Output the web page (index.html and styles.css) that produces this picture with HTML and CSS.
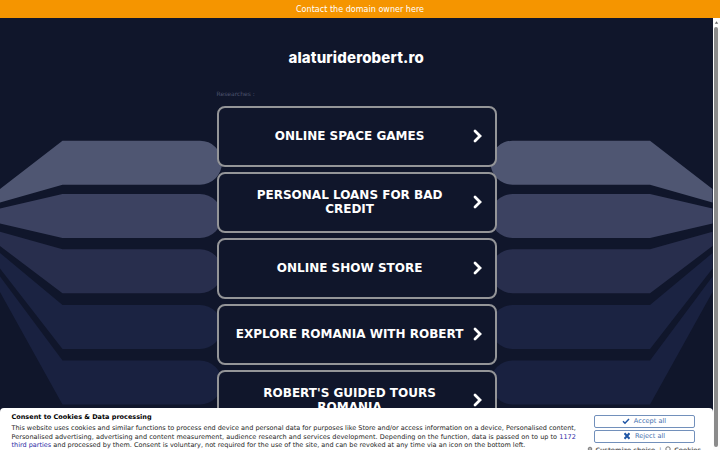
FILE: index.html
```
<!DOCTYPE html>
<html lang="en">
<head>
<meta charset="utf-8">
<title>alaturiderobert.ro</title>
<link rel="stylesheet" href="styles.css">
</head>
<body>
<a class="owner-bar">Contact the domain owner here</a>
<div class="viewport">
  <main class="page">
    <svg class="backdrop" viewBox="0 18 712.5 432" width="712.5" height="432" aria-hidden="true">
      <defs>
        <g id="bands">
          <path fill="#4f5672" d="M0 189L62.5 140.7H200a22 22 0 0 1 0 44H62.5L0 202.5z"/>
          <path fill="#3c4261" d="M0 208.5L62.5 194H200a22 22 0 0 1 0 44H62.5L0 223.5z"/>
          <path fill="#282e4d" d="M0 231.8L62.5 249.3H200a22 22 0 0 1 0 44H62.5L0 246z"/>
          <path fill="#1b2342" d="M0 253L62.5 305H200a22 22 0 0 1 0 44H62.5L0 268.5z"/>
          <path fill="#192140" d="M0 276.5L62.5 360.5H200a22 22 0 0 1 0 44H62.5L0 292z"/>
        </g>
      </defs>
      <use href="#bands"/>
      <use href="#bands" transform="translate(712.5 0) scale(-1 1)"/>
    </svg>
    <h1 class="domain">alaturiderobert.ro</h1>
    <section class="results">
      <p class="label">Researches :</p>
      <a class="result"><span class="name">Online Space Games</span><svg class="chevron" viewBox="0 0 10 14"><path d="M2 2l5 5-5 5"/></svg></a>
      <a class="result"><span class="name">Personal Loans For Bad Credit</span><svg class="chevron" viewBox="0 0 10 14"><path d="M2 2l5 5-5 5"/></svg></a>
      <a class="result"><span class="name">Online Show Store</span><svg class="chevron" viewBox="0 0 10 14"><path d="M2 2l5 5-5 5"/></svg></a>
      <a class="result"><span class="name">Explore Romania With Robert</span><svg class="chevron" viewBox="0 0 10 14"><path d="M2 2l5 5-5 5"/></svg></a>
      <a class="result"><span class="name">Robert's Guided Tours Romania</span><svg class="chevron" viewBox="0 0 10 14"><path d="M2 2l5 5-5 5"/></svg></a>
    </section>
  </main>
  <div class="scrollbar"><svg class="arrow" viewBox="0 0 6 9"><path d="M1 6L3 3l2 3z"/></svg><div class="thumb"></div></div>
</div>
<aside class="consent">
  <div class="copy">
    <h2>Consent to Cookies &amp; Data processing</h2>
    <p class="l1">This website uses cookies and similar functions to process end device and personal data for purposes like Store and/or access information on a device, Personalised content,</p>
    <p class="l2">Personalised advertising, advertising and content measurement, audience research and services development. Depending on the function, data is passed on to up to <a>1172</a></p>
    <p class="l3"><a>third parties</a> and processed by them. Consent is voluntary, not required for the use of the site, and can be revoked at any time via an icon on the bottom left.</p>
  </div>
  <div class="actions">
    <button><svg viewBox="0 0 8 8"><path d="M1 4.2l2 2L7 2"/></svg>Accept all</button>
    <button><svg class="cross" viewBox="0 0 8 8"><path d="M1.5 1.3l5 5.4M6.5 1.3l-5 5.4"/></svg>Reject all</button>
    <div class="links">
      <svg viewBox="0 0 6 6"><circle cx="3" cy="3" r="1.8"/><circle cx="3" cy="3" r=".5"/></svg><span>Customize choice</span><i>|</i>
      <svg viewBox="0 0 6 6"><circle cx="3" cy="3" r="2.2"/></svg><span>Cookies</span>
    </div>
  </div>
</aside>
</body>
</html>
```
FILE: styles.css
```
* { box-sizing: border-box; }
html, body { height: 100%; }
body { margin: 0; overflow: hidden; display: flex; flex-direction: column; background: #10162b; font-family: "DejaVu Sans", sans-serif; }
h1, h2, p { margin: 0; }
.owner-bar { flex: none; height: 18px; background: #f59500; color: #fff; font: 8px/19px "DejaVu Sans", sans-serif; letter-spacing: 0.03px; text-align: center; }
.viewport { flex: none; height: 432px; display: flex; overflow: hidden; }
.page { position: relative; flex: none; width: 712.5px; overflow: hidden; background: #10162b; }
.backdrop { position: absolute; inset: 0; display: block; }
.domain { position: relative; margin-top: 28px; height: 24px; text-align: center; color: #fff; font: 800 15px/24px "Inter", sans-serif; letter-spacing: 0.15px; }
.results { position: relative; width: 280px; margin: 19px 0 0 216.6px; }
.label { height: 17px; font-size: 6px; line-height: 10px; color: #4d546e; }
.result { display: flex; align-items: center; height: 61px; margin-bottom: 5px; padding: 0 12px 1px 15px; border: 2px solid #949598; border-radius: 8px; background: #10162b; color: #fff; }
.name { flex: 1; text-align: center; text-transform: uppercase; font-size: 12px; line-height: 14.5px; font-weight: 700; padding-right: 6px; margin-left: -1px; }
.chevron { flex: none; width: 10px; height: 14px; fill: none; stroke: #fff; stroke-width: 2.8; stroke-linecap: round; stroke-linejoin: miter; }
.scrollbar { flex: 1; background: #fcfcfc; padding-left: 1.5px; }
.arrow { display: block; width: 5px; height: 9px; fill: #666; }
.thumb { width: 4px; height: 420px; border-radius: 2px; background: #8b8b8b; }
.consent { position: absolute; left: 0; bottom: 0; width: 712.5px; height: 42px; display: flex; overflow: hidden; padding: 4.5px 0 0 11.5px; background: #fff; border-radius: 4px 4px 0 0; color: #1c1c1c; }
.copy { width: 582px; flex: none; white-space: nowrap; }
.copy h2 { height: 11.5px; font-size: 6.5px; line-height: 9px; color: #000; }
.copy p { font-size: 6.5px; line-height: 8.5px; }
.copy .l2 { letter-spacing: 0.032px; }
.copy a { color: #2929a5; }
.actions { flex: none; width: 102px; padding-top: 2px; }
.actions button { display: flex; align-items: center; justify-content: center; gap: 4px; width: 101px; height: 13px; margin: 0 0 2px; padding: 0; border: 1px solid #7290bb; border-radius: 2px; background: #fff; color: #4470ae; font: 6.6px/11px "DejaVu Sans", sans-serif; }
.actions button svg { width: 8px; height: 8px; fill: none; stroke: #1f55a5; stroke-width: 1.5; }
.actions button .cross { stroke-width: 2; }
.links { display: flex; align-items: center; gap: 3px; margin: 0 -20px 0 -7px; font-size: 6.1px; line-height: 9px; font-weight: 700; color: #666; white-space: nowrap; }
.links svg { flex: none; width: 6px; height: 6px; fill: none; stroke: #777; }
.links i { font-style: normal; font-weight: 400; margin: 0 1px; }
```
